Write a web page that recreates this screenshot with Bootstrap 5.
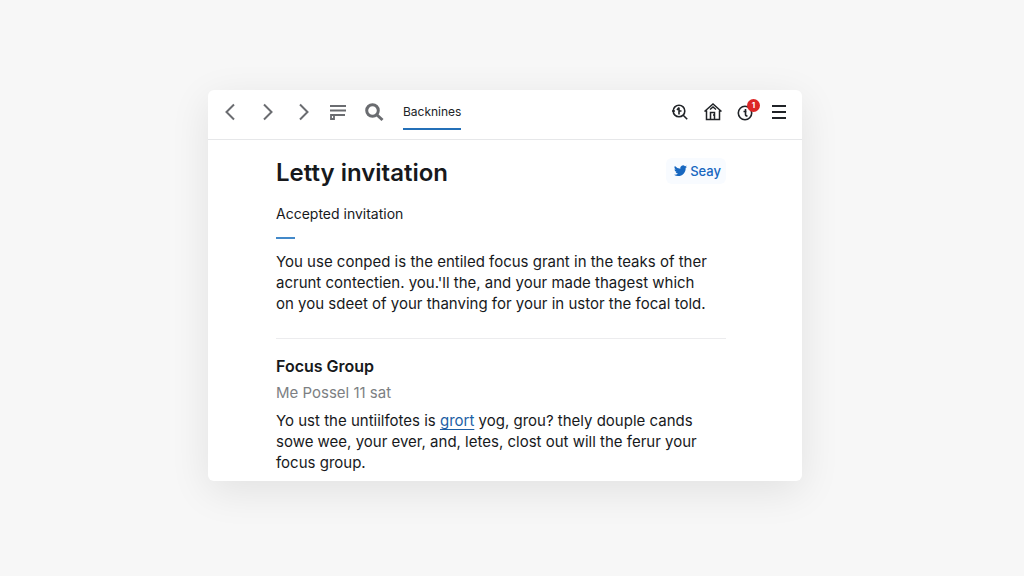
<!DOCTYPE html>
<html lang="en">
<head>
<meta charset="utf-8">
<meta name="viewport" content="width=device-width, initial-scale=1">
<title>Letty invitation</title>
<link href="https://cdn.jsdelivr.net/npm/bootstrap@5.3.0/dist/css/bootstrap.min.css" rel="stylesheet">
<style>
  body { background: #f7f7f7; color: #17191c; font-family: Inter, "Liberation Sans", sans-serif; font-size: 15px; line-height: 21px; }
  .page { padding: 90px 14px 90px 0; }
  .window { max-width: 594px; border-radius: 6px; box-shadow: 0 10px 40px rgba(0, 0, 0, .09); }
  .toolbar { height: 50px; padding: 0 13px 5px 12px; border-bottom: 1px solid #e6e7e9; }
  .tool { display: flex; padding: 0; border: 0; background: none; color: #6a6c70; }
  .tools-left { gap: 16px; }
  .tools-right { gap: 13px; }
  .tools-right .tool { color: #202327; }
  .tab-link { margin-left: 3px; padding: 8px 0 6px; border-bottom: 2px solid #2470b8; color: #202327; font-size: 12px; line-height: 20px; text-decoration: none; }
  .alert-dot { position: absolute; top: -3px; right: -4px; width: 13px; height: 13px; border-radius: 50%; background: #dc2626; color: #fff; font-size: 8px; font-weight: 700; line-height: 13px; }
  .content { padding: 18px 76px 8px 68px; }
  h1 { font-size: 24px; font-weight: 600; line-height: 30px; }
  h2 { font-size: 16px; font-weight: 600; line-height: 24px; }
  .share { display: flex; align-items: center; gap: 3px; padding: 0 5px 0 8px; height: 26px; border: 0; border-radius: 6px; background: #f8fbff; color: #1767c0; font-size: 13px; font-weight: 500; }
  .subtitle { margin: 15px 0 13px; font-size: 14px; }
  .accent { width: 19px; height: 2px; background: #4389c9; }
  .divider { height: 1px; margin: 24px 0 15px; background: #ececee; }
  .meta { margin: 4px 0 7px; color: #7d7f83; }
  .copy a { color: #1d5fa5; text-underline-offset: 3px; }
</style>
</head>
<body>
<main class="page">
  <div class="window bg-white mx-auto">
    <header class="toolbar d-flex justify-content-between align-items-center">
      <div class="tools-left d-flex align-items-center">
        <button class="tool" type="button" aria-label="Back"><svg width="20" height="20" viewBox="0 0 20 20" fill="none" stroke="currentColor" stroke-width="2"><path d="M14 2.500 6.500 10l7.500 7.500"/></svg></button>
        <button class="tool" type="button" aria-label="Forward"><svg width="20" height="20" viewBox="0 0 20 20" fill="none" stroke="currentColor" stroke-width="2"><path d="m8 2.500 7.500 7.500L8 17.500"/></svg></button>
        <button class="tool" type="button" aria-label="Next"><svg width="20" height="20" viewBox="0 0 20 20" fill="none" stroke="currentColor" stroke-width="2"><path d="m8 2.500 7.500 7.500L8 17.500"/></svg></button>
        <button class="tool" type="button" aria-label="Reading list"><svg width="20" height="20" viewBox="0 0 20 20" fill="none" stroke="currentColor" stroke-width="1.800"><path d="M2 4h16M2 8.500h16M6 13h11M3 13h3v4H3z"/></svg></button>
        <button class="tool" type="button" aria-label="Search"><svg width="20" height="20" viewBox="0 0 20 20" fill="none" stroke="currentColor" stroke-width="3"><circle cx="8.500" cy="8.500" r="5.800"/><path d="m12.500 12.500 6 5.500"/></svg></button>
        <a class="tab-link" href="#">Backnines</a>
      </div>
      <div class="tools-right d-flex align-items-center">
        <button class="tool" type="button" aria-label="Zoom"><svg width="20" height="20" viewBox="0 0 20 20" fill="none" stroke="currentColor" stroke-width="1.600"><circle cx="9" cy="9" r="5.800"/><path d="m13.200 13.200 4 4M9 5.500v7M7 8l2-2.500M9 9h2.500M2 9h3"/></svg></button>
        <button class="tool" type="button" aria-label="Home"><svg width="20" height="20" viewBox="0 0 20 20" fill="none" stroke="currentColor" stroke-width="1.500"><path d="m1.500 9.500 8.500-7.500 8.500 7.500M3.500 8.500v9h13v-9M7.500 17.500v-7h4v7M7 7.500l3-2.500 3 2.500M10 13h1.500"/></svg></button>
        <button class="tool position-relative" type="button" aria-label="Activity"><svg width="20" height="20" viewBox="0 0 20 20" fill="none" stroke="currentColor" stroke-width="1.600"><circle cx="9" cy="11" r="6.700"/><path d="M9.500 7v5.500c0 1 .5 1.500 2 1.500M7.500 9.500h3"/></svg><span class="alert-dot">1</span></button>
        <button class="tool" type="button" aria-label="Menu"><svg width="20" height="20" viewBox="0 0 20 20" fill="none" stroke="currentColor" stroke-width="1.800"><path d="M3 4h14M3 10h14M3 16h14"/></svg></button>
      </div>
    </header>
    <article class="content">
      <div class="d-flex justify-content-between align-items-start">
        <h1 class="mb-0">Letty invitation</h1>
        <button class="share" type="button"><svg width="13" height="12" viewBox="0 0 24 22" fill="currentColor" aria-hidden="true"><path d="M24 3.200a9 9 0 0 1-2.800.8A5 5 0 0 0 23.300 1a10 10 0 0 1-3.100 1.200 4.900 4.900 0 0 0-8.400 4.500A14 14 0 0 1 1.700 1.600a4.900 4.900 0 0 0 1.500 6.600 5 5 0 0 1-2.200-.6c0 2.300 1.600 4.400 3.900 4.900a5 5 0 0 1-2.200.1 4.900 4.900 0 0 0 4.600 3.400A10 10 0 0 1 0 18a14 14 0 0 0 7.500 2.200c9.100 0 14.300-7.700 14-14.600A10 10 0 0 0 24 3.200z"/></svg><span>Seay</span></button>
      </div>
      <p class="subtitle">Accepted invitation</p>
      <div class="accent"></div>
      <p class="copy mt-2 pt-1 mb-0">You use conped is the entiled focus grant in the teaks of ther<br>acrunt contectien. you.'ll the, and your made thagest which<br>on you sdeet of your thanving for your in ustor the focal told.</p>
      <div class="divider"></div>
      <h2 class="mb-0">Focus Group</h2>
      <p class="meta">Me Possel 11 sat</p>
      <p class="copy mb-0">Yo ust the untiilfotes is <a href="#">grort</a> yog, grou? thely douple cands<br>sowe wee, your ever, and, letes, clost out will the ferur your<br>focus group.</p>
    </article>
  </div>
</main>
<script src="https://cdn.jsdelivr.net/npm/bootstrap@5.3.0/dist/js/bootstrap.bundle.min.js"></script>
</body>
</html>
